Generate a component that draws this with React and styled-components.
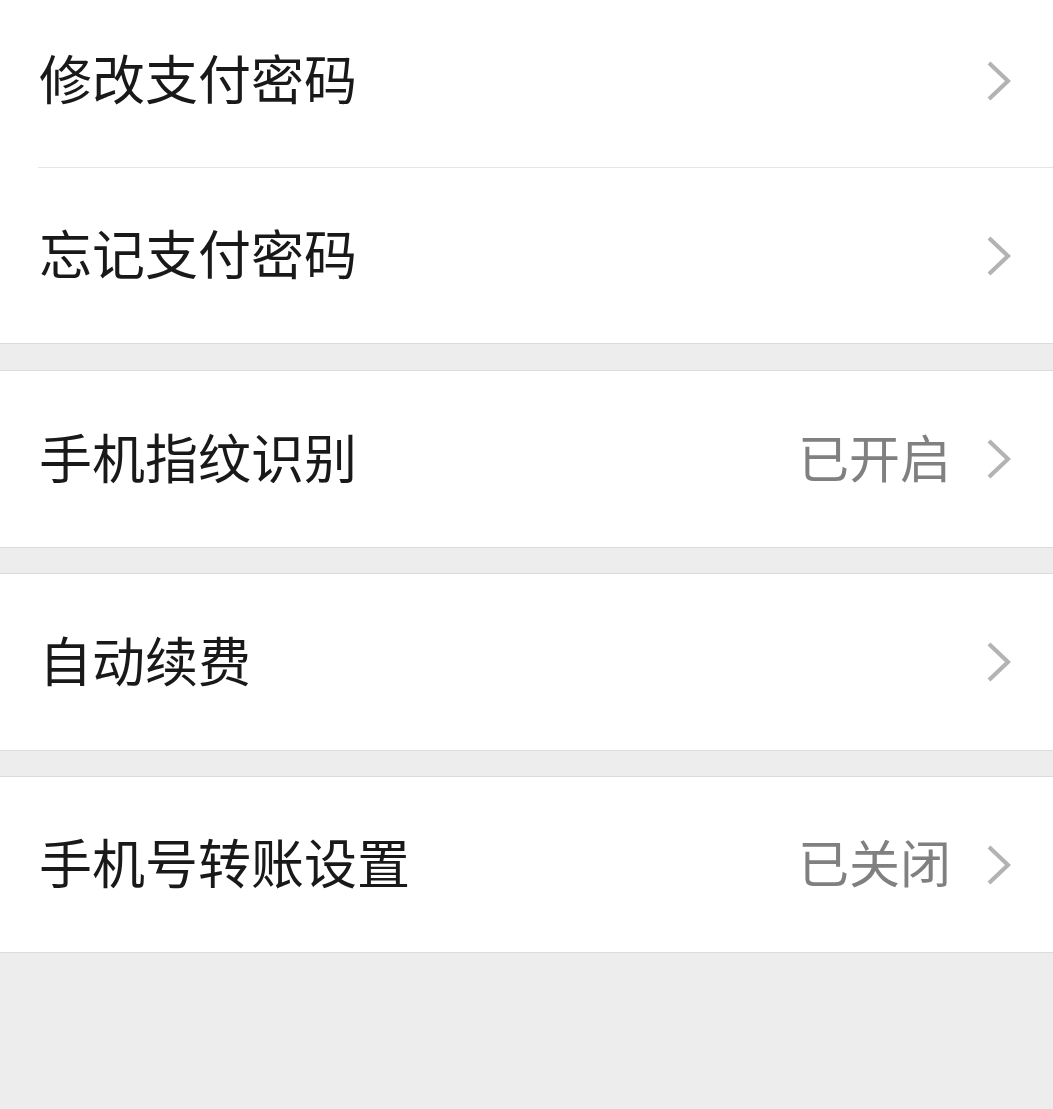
import React from "react";
import styled, { createGlobalStyle } from "styled-components";

const Global = createGlobalStyle`
  html, body { margin: 0; padding: 0; background: #ededed; }
  body { font-family: "Noto Sans CJK SC", "Noto Sans", sans-serif; overflow: hidden; }
`;

const Page = styled.div`
  width: 1053px;
  height: 1109px;
  background: #ededed;
  overflow: hidden;
`;

const List = styled.div`
  display: flex;
  flex-direction: column;
  margin-top: -7px;
`;

const Group = styled.div`
  background: #fff;
  border-top: ${(p) => (p.$first ? "none" : "1px solid #dcdcdc")};
  border-bottom: 1px solid #dcdcdc;
  margin-top: ${(p) => (p.$first ? "0" : `${p.$gap}px`)};
  display: flex;
  flex-direction: column;
`;

const Row = styled.div`
  height: ${(p) => p.$h}px;
  display: flex;
  align-items: center;
  padding-left: 39px;
  padding-right: 42px;
  position: relative;
  &::after {
    content: "";
    display: ${(p) => (p.$divider ? "block" : "none")};
    position: absolute;
    left: 38px;
    right: 0;
    bottom: 0;
    height: 1px;
    background: #e5e5e5;
  }
`;

const Title = styled.span`
  flex: 1;
  font-size: 53px;
  color: #191919;
  line-height: 1;
  margin-top: -6px;
`;

const Value = styled.span`
  font-size: 51px;
  color: #808080;
  line-height: 1;
  margin-right: 36px;
  margin-top: -6px;
`;

const Chevron = () => (
  <svg width="24" height="40" viewBox="0 0 24 40" fill="none">
    <polyline
      points="2,2 21,20 2,38"
      stroke="#b3b3b3"
      strokeWidth="4.2"
      strokeLinecap="butt"
      strokeLinejoin="miter"
    />
  </svg>
);

const groups = [
  { gap: 0, rows: [{ t: "修改支付密码", h: 175 }, { t: "忘记支付密码", h: 175 }] },
  { gap: 26, rows: [{ t: "手机指纹识别", v: "已开启", h: 176 }] },
  { gap: 25, rows: [{ t: "自动续费", h: 176 }] },
  { gap: 25, rows: [{ t: "手机号转账设置", v: "已关闭", h: 175 }] },
];

export default function App() {
  return (
    <Page>
      <Global />
      <List>
        {groups.map((g, gi) => (
          <Group key={gi} $first={gi === 0} $gap={g.gap}>
            {g.rows.map((r, ri) => (
              <Row key={ri} $h={r.h} $divider={ri < g.rows.length - 1}>
                <Title>{r.t}</Title>
                {r.v && <Value>{r.v}</Value>}
                <Chevron />
              </Row>
            ))}
          </Group>
        ))}
      </List>
    </Page>
  );
}
